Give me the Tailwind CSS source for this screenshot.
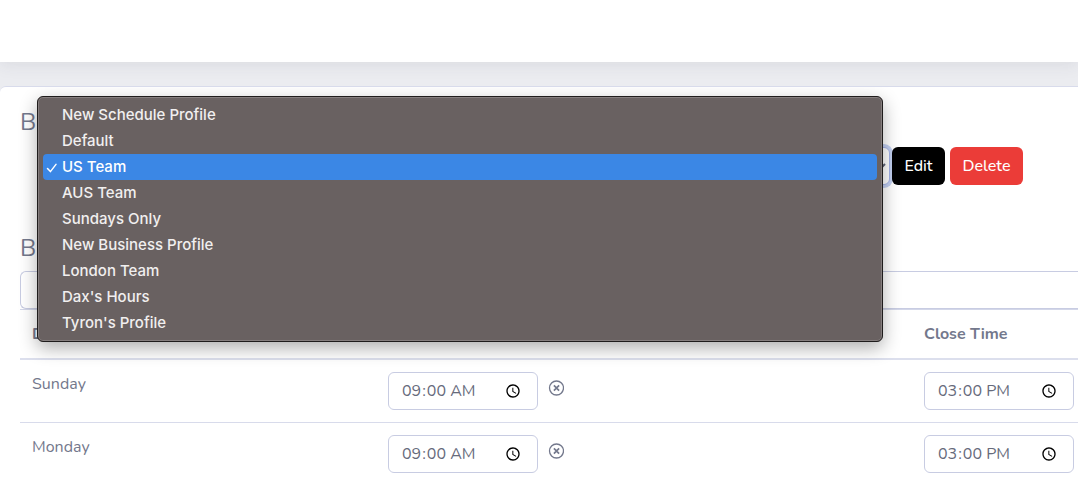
<!DOCTYPE html>
<html lang="en">
<head>
    <meta charset="UTF-8">
    <meta name="viewport" content="width=device-width, initial-scale=1.0">
    <title>Business Hours</title>
    <script src="https://cdn.jsdelivr.net/npm/@tailwindcss/browser@4"></script>
</head>
<body class="flex h-screen flex-col overflow-hidden bg-[#ebecf0] font-[Nunito,Lato,sans-serif] text-base text-[#73788c]">
    <header class="h-[62px] shrink-0 bg-white shadow-[0_2px_16px_rgba(60,60,80,0.10)]"></header>

    <main class="mt-6 min-h-0 flex-1 overflow-hidden rounded-tl-md border-t border-[#d8dbeb] bg-white pl-5">
        <h2 class="pt-5 text-2xl leading-[30px]">Business</h2>

        <!-- profile picker -->
        <div class="relative mt-2.5 flex items-center pl-5">
            <label for="profile" class="sr-only">Profile</label>
            <select id="profile" class="h-[38px] w-[850px] rounded-md border border-[#a3b2e8] bg-white px-2 text-[#5f6478] ring-3 ring-[#c3d0f2]">
                <option>New Schedule Profile</option>
                <option>Default</option>
                <option selected>US Team</option>
                <option>AUS Team</option>
                <option>Sundays Only</option>
                <option>New Business Profile</option>
                <option>London Team</option>
                <option>Dax's Hours</option>
                <option>Tyron's Profile</option>
            </select>
            <button type="button" class="z-1 ml-0.5 h-[38px] w-[53px] rounded-md bg-black font-medium text-white">Edit</button>
            <button type="button" class="ml-[5px] h-[38px] w-[73px] rounded-md bg-[#eb3c38] font-medium text-white">Delete</button>

            <!-- open list -->
            <ul role="listbox" aria-label="Profile" class="absolute -top-[51px] left-[17px] z-10 w-[846px] rounded-md border border-[#1f1c1c] bg-[#696161] p-[5px] font-[Inter,sans-serif] text-[15px] leading-[26px] font-medium text-[#f1efef] shadow-[inset_0_0_0_1px_#857e7e,0_6px_18px_rgba(0,0,0,0.32)]">
                <li role="option" class="pl-[19px]">New Schedule Profile</li>
                <li role="option" class="pl-[19px]">Default</li>
                <li role="option" aria-selected="true" class="flex items-center rounded bg-[#3b87e5] text-white">
                    <svg class="mt-0.5 ml-[3px] mr-1 h-3 w-3" viewBox="0 0 12 12" fill="none" stroke="currentColor" stroke-width="1.5" stroke-linecap="round" stroke-linejoin="round"><path d="M1.5 6.6 4.4 9.6 10 2.4"/></svg>
                    US Team
                </li>
                <li role="option" class="pl-[19px]">AUS Team</li>
                <li role="option" class="pl-[19px]">Sundays Only</li>
                <li role="option" class="pl-[19px]">New Business Profile</li>
                <li role="option" class="pl-[19px]">London Team</li>
                <li role="option" class="pl-[19px]">Dax's Hours</li>
                <li role="option" class="pl-[19px]">Tyron's Profile</li>
            </ul>
        </div>

        <label for="name" class="mt-12 block text-2xl leading-[30px]">Business</label>
        <input id="name" type="text" class="mt-2 block h-[38px] w-full rounded-l-md border border-r-0 border-[#c8cce2] px-3">

        <table class="w-full table-fixed border-t border-[#d3d7e9] text-left">
            <colgroup>
                <col class="w-[356px]">
                <col class="w-[536px]">
                <col>
            </colgroup>
            <thead>
                <tr class="border-b-2 border-[#dcdfed]">
                    <th class="p-3">Day</th>
                    <th class="p-3">Open Time</th>
                    <th class="p-3">Close Time</th>
                </tr>
            </thead>
            <tbody>
                <tr class="border-b border-[#d8dbeb]">
                    <td class="p-3 align-top">Sunday</td>
                    <td class="p-3">
                        <div class="flex">
                            <input type="time" value="09:00" aria-label="Sunday open time" class="h-[38px] w-[150px] rounded-md border border-[#c8cce2] px-3 text-[#666a7b]">
                            <button type="button" aria-label="Clear Sunday" class="ml-2.5 mt-2 h-4 w-4">
                                <svg class="h-4 w-4" viewBox="0 0 16 16" fill="none" stroke="currentColor"><circle cx="8.5" cy="8" r="7" stroke-width="1.3"/><path stroke-width="1.7" d="m5.9 5.4 5.2 5.2m0-5.2-5.2 5.2"/></svg>
                            </button>
                        </div>
                    </td>
                    <td class="py-3 pl-3">
                        <input type="time" value="15:00" aria-label="Sunday close time" class="block h-[38px] w-[150px] rounded-md border border-[#c8cce2] px-3 text-[#666a7b]">
                    </td>
                </tr>
                <tr class="border-b border-[#d8dbeb]">
                    <td class="p-3 align-top">Monday</td>
                    <td class="p-3">
                        <div class="flex">
                            <input type="time" value="09:00" aria-label="Monday open time" class="h-[38px] w-[150px] rounded-md border border-[#c8cce2] px-3 text-[#666a7b]">
                            <button type="button" aria-label="Clear Monday" class="ml-2.5 mt-2 h-4 w-4">
                                <svg class="h-4 w-4" viewBox="0 0 16 16" fill="none" stroke="currentColor"><circle cx="8.5" cy="8" r="7" stroke-width="1.3"/><path stroke-width="1.7" d="m5.9 5.4 5.2 5.2m0-5.2-5.2 5.2"/></svg>
                            </button>
                        </div>
                    </td>
                    <td class="py-3 pl-3">
                        <input type="time" value="15:00" aria-label="Monday close time" class="block h-[38px] w-[150px] rounded-md border border-[#c8cce2] px-3 text-[#666a7b]">
                    </td>
                </tr>
            </tbody>
        </table>
    </main>
</body>
</html>
